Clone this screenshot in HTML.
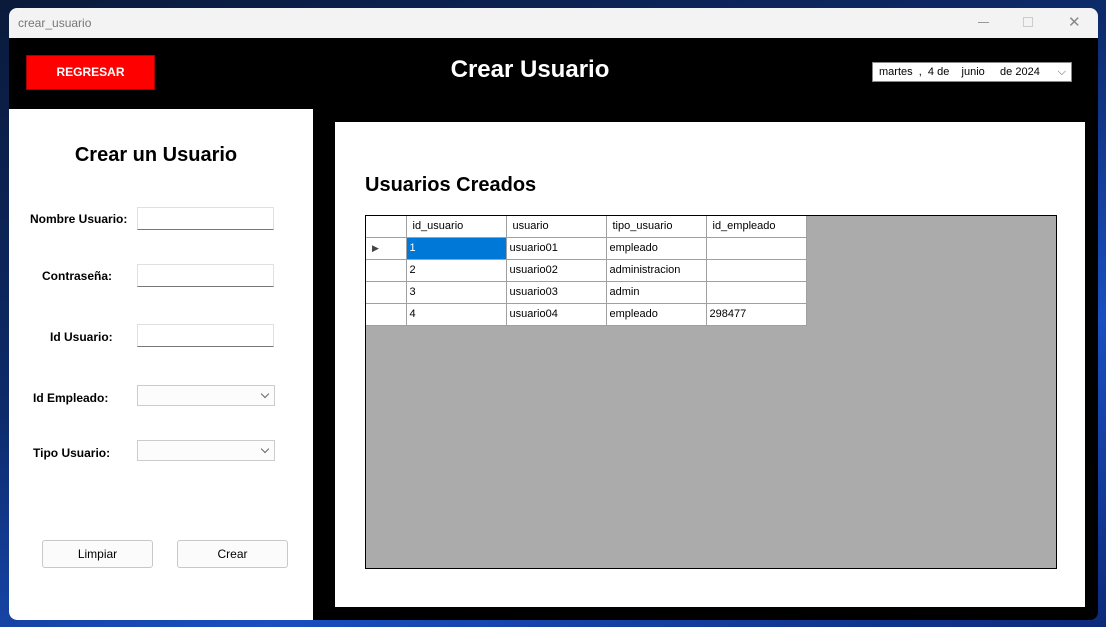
<!DOCTYPE html>
<html><head><meta charset="utf-8"><style>
*{margin:0;padding:0;box-sizing:border-box}
body{width:1106px;height:627px;overflow:hidden;position:relative;font-family:"Liberation Sans",sans-serif;
background:linear-gradient(160deg,#0a1a3a 0%,#0d2a6a 40%,#1a4fc0 70%,#0d2a7a 100%);}
.win{position:absolute;left:9px;top:8px;width:1089px;height:612px;background:#000;border-radius:8px;overflow:hidden}
.tb{position:absolute;left:0;top:0;width:100%;height:30px;background:#f3f3f3;font-size:12px;color:#777;padding:8px 0 0 9px}
.ab{position:absolute;font-size:12px;color:#999}
.reg{position:absolute;left:17px;top:47px;width:129px;height:35px;background:#f00;border:1px solid #a00;color:#fff;font-weight:bold;font-size:12px;text-align:center;line-height:33px}
.title{position:absolute;left:0;width:1042px;top:48px;text-align:center;color:#fff;font-size:24px;font-weight:bold}
.date{position:absolute;left:863px;top:54px;width:200px;height:20px;background:#fff;border:1px solid #888;font-size:11px;color:#000;line-height:18px;padding-left:6px;white-space:pre}
.lp{position:absolute;left:0;top:101px;width:304px;height:511px;background:#fff;border-bottom-left-radius:8px}
.lp h2{position:absolute;left:0;width:294px;top:35px;text-align:center;font-size:20px}
.lbl{position:absolute;font-size:12px;font-weight:bold;color:#000}
.in{position:absolute;left:128px;width:137px;height:23px;border:1px solid #e0e0e0;border-bottom:1px solid #777;background:#fff}
.cb{position:absolute;left:128px;width:138px;height:21px;border:1px solid #ccc;background:#fcfcfc}
.cb:after{content:"";position:absolute;right:6px;top:5px;width:5px;height:5px;border-right:1px solid #666;border-bottom:1px solid #666;transform:rotate(45deg)}
.btn{position:absolute;top:431px;width:111px;height:28px;border:1px solid #c8c8c8;border-radius:3px;background:#fbfbfb;font-size:12px;text-align:center;line-height:26px}
.rp{position:absolute;left:326px;top:114px;width:750px;height:485px;background:#fff}
.rp h3{position:absolute;left:30px;top:52px;font-size:20px}
.grid{position:absolute;left:30px;top:93px;width:692px;height:354px;background:#ababab;border:1px solid #000}
table{border-collapse:collapse;font-size:11px;background:#fff}
td{border:1px solid #a0a0a0;height:22px;padding-left:3px;width:100px}
td:first-child{width:40px}
tr:first-child td{height:21px;padding-left:6px;border-top:none}
</style></head><body>
<div class="win">
<div class="tb">crear_usuario</div>
<div class="ab" style="left:969px;top:14px;width:11px;height:1px;background:#999"></div>
<div class="ab" style="left:1014px;top:9px;width:10px;height:10px;border:1px solid #ccc"></div>
<div class="ab" style="left:1059px;top:5px;font-size:15px;color:#888">✕</div>
<div class="reg">REGRESAR</div>
<div class="title">Crear Usuario</div>
<div class="date">martes  ,  4 de    junio     de 2024  <span style="position:absolute;right:5px;color:#555">⌵</span></div>
<div class="lp">
<h2>Crear un Usuario</h2>
<div class="lbl" style="left:21px;top:103px">Nombre Usuario:</div><div class="in" style="top:98px"></div>
<div class="lbl" style="left:33px;top:160px">Contraseña:</div><div class="in" style="top:155px"></div>
<div class="lbl" style="left:41px;top:221px">Id Usuario:</div><div class="in" style="top:215px"></div>
<div class="lbl" style="left:24px;top:282px">Id Empleado:</div><div class="cb" style="top:276px"></div>
<div class="lbl" style="left:24px;top:337px">Tipo Usuario:</div><div class="cb" style="top:331px"></div>
<div class="btn" style="left:33px">Limpiar</div>
<div class="btn" style="left:168px">Crear</div>
</div>
<div class="rp">
<h3>Usuarios Creados</h3>
<div class="grid"><table>
<tr><td style="border-left:none"></td><td>id_usuario</td><td>usuario</td><td>tipo_usuario</td><td>id_empleado</td></tr>
<tr><td style="border-left:none;font-size:9px;color:#444;padding-left:6px">▶</td><td style="background:#0078d7;color:#fff">1</td><td>usuario01</td><td>empleado</td><td></td></tr>
<tr><td style="border-left:none"></td><td>2</td><td>usuario02</td><td>administracion</td><td></td></tr>
<tr><td style="border-left:none"></td><td>3</td><td>usuario03</td><td>admin</td><td></td></tr>
<tr><td style="border-left:none"></td><td>4</td><td>usuario04</td><td>empleado</td><td>298477</td></tr>
</table></div>
</div>
</div>
</body></html>
